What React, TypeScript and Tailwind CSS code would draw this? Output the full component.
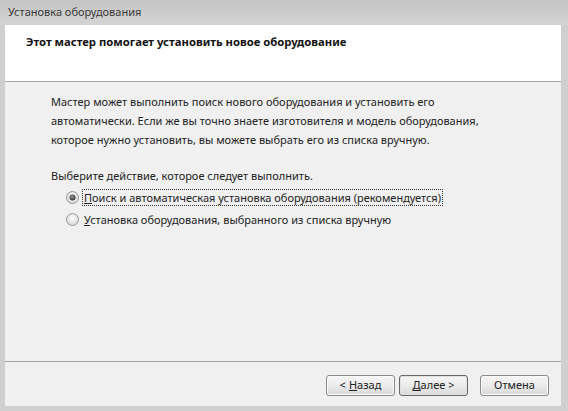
import React from "react";

function Radio({ checked }: { checked: boolean }) {
  return (
    <svg width="13" height="13" viewBox="0 0 13 13" className="shrink-0">
      <defs>
        <radialGradient id={checked ? "rg1" : "rg2"} cx="50%" cy="40%" r="60%">
          <stop offset="0%" stopColor="#ffffff" />
          <stop offset="100%" stopColor="#d6d6d6" />
        </radialGradient>
        <radialGradient id="dot" cx="45%" cy="40%" r="60%">
          <stop offset="0%" stopColor="#9a9a9a" />
          <stop offset="100%" stopColor="#303030" />
        </radialGradient>
      </defs>
      <circle cx="6.5" cy="6.5" r="6" fill={`url(#${checked ? "rg1" : "rg2"})`} stroke="#9a9a9a" strokeWidth="1" />
      {checked && <circle cx="6.5" cy="6.5" r="3" fill="url(#dot)" />}
    </svg>
  );
}

function Btn({ children, def }: { children: React.ReactNode; def?: boolean }) {
  return (
    <div
      className={`w-[69px] h-[21px] rounded-[3px] border flex items-center justify-center text-[11px] text-[#222] bg-gradient-to-b from-[#f6f6f6] via-[#ebebeb] to-[#d9d9d9] ${
        def ? "border-[#6a6a6a] shadow-[inset_0_0_0_1px_#e0e0e0]" : "border-[#8a8a8a] shadow-[inset_0_0_0_1px_#fafafa]"
      }`}
    >
      {children}
    </div>
  );
}

export default function App() {
  return (
    <div
      className="w-[568px] h-[411px] bg-[#cfcfcf] flex flex-col overflow-hidden"
      style={{ fontFamily: '"Noto Sans", "Open Sans", sans-serif' }}
    >
      <div className="h-[25px] shrink-0 flex items-center pl-[8px] bg-gradient-to-b from-[#c4c4c4] to-[#d4d4d4] text-[11px] text-[#3a3a3a]">
        Установка оборудования
      </div>
      <div className="flex-1 ml-[5px] mr-[7px] mb-[5px] flex flex-col bg-[#f0f0f0]">
        <div className="h-[57px] shrink-0 bg-white border-b border-[#a4a4a4] pl-[21px] pt-[9px]">
          <div className="text-[11.3px] font-bold text-[#111] leading-[16px]">
            Этот мастер помогает установить новое оборудование
          </div>
        </div>
        <div className="flex-1 pl-[46px] pt-[10px] text-[11px] text-[#222] leading-[19px]">
          <p>
            Мастер может выполнить поиск нового оборудования и установить его
            <br />
            автоматически. Если же вы точно знаете изготовителя и модель оборудования,
            <br />
            которое нужно установить, вы можете выбрать его из списка вручную.
          </p>
          <p className="mt-[17px]">Выберите действие, которое следует выполнить.</p>
          <div className="mt-[1px] pl-[15px] flex flex-col">
            <div className="h-[22px] flex items-center">
              <Radio checked />
              <span className="ml-[3px] px-[1px] border border-dotted border-[#333] leading-[15px]">
                <span className="underline">П</span>оиск и автоматическая установка оборудования (рекомендуется)
              </span>
            </div>
            <div className="h-[22px] flex items-center">
              <Radio checked={false} />
              <span className="ml-[4px] px-[1px] leading-[15px]">
                <span className="underline">У</span>становка оборудования, выбранного из списка вручную
              </span>
            </div>
          </div>
        </div>
        <div className="h-[45px] shrink-0 border-t border-[#a4a4a4] flex items-start justify-end pt-[13px] pr-[12px]">
          <Btn>
            &lt; <span className="underline ml-[3px]">Н</span>азад
          </Btn>
          <div className="w-[4px]" />
          <Btn def>
            <span className="underline">Д</span>алее &gt;
          </Btn>
          <div className="w-[12px]" />
          <Btn>Отмена</Btn>
        </div>
      </div>
    </div>
  );
}
